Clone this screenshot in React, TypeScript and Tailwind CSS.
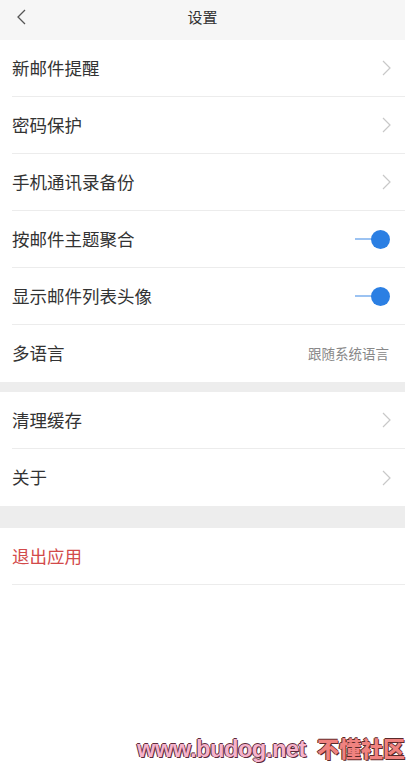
const groupA = [
  { label: "新邮件提醒", kind: "link" },
  { label: "密码保护", kind: "link" },
  { label: "手机通讯录备份", kind: "link" },
  { label: "按邮件主题聚合", kind: "toggle" },
  { label: "显示邮件列表头像", kind: "toggle" },
  { label: "多语言", kind: "value", value: "跟随系统语言" },
];

const groupB = ["清理缓存", "关于"];

const font = "font-['Noto_Sans_CJK_SC','Noto_Sans',sans-serif]";

function Chevron() {
  return (
    <svg width="9" height="16" viewBox="0 0 9 16" fill="none" className="mr-[14px]">
      <path d="M1 1l7 7-7 7" stroke="#c8c8c8" strokeWidth="1.2" />
    </svg>
  );
}

function Toggle() {
  return (
    <div className="flex items-center mr-[15px]">
      <div className="h-[2px] w-[18px] bg-[#9cc3f2]" />
      <div className="h-[19px] w-[19px] rounded-full bg-[#2b7fe3] -ml-[2px]" />
    </div>
  );
}

function Row({ label, right, danger, last }: { label: string; right?: React.ReactNode; danger?: boolean; last?: boolean }) {
  return (
    <div className="pl-3">
      <div className={`flex h-[57px] items-center justify-between ${last ? "" : "border-b border-[#ececec]"}`}>
        <span className={`text-[17.5px] ${danger ? "text-[#d24a4a]" : "text-[#333]"}`}>{label}</span>
        {right}
      </div>
    </div>
  );
}

export default function App() {
  return (
    <div className={`relative h-[768px] w-[412px] bg-white ${font}`}>
      <div className="w-[405px]">
        {/* Header */}
        <div className="relative flex h-10 items-center justify-center bg-[#f6f6f6] pb-[6px]">
          <svg width="10" height="16" viewBox="0 0 10 16" fill="none" className="absolute left-[16px] top-[9px]">
            <path d="M9 1L2 8l7 7" stroke="#555" strokeWidth="1.3" />
          </svg>
          <span className="text-[15px] text-[#333]">设置</span>
        </div>

        {groupA.map((item, i) => (
          <Row
            key={item.label}
            label={item.label}
            last={i === groupA.length - 1}
            right={
              item.kind === "link" ? (
                <Chevron />
              ) : item.kind === "toggle" ? (
                <Toggle />
              ) : (
                <span className="mr-[16px] text-[13.5px] text-[#888]">{item.value}</span>
              )
            }
          />
        ))}

        <div className="h-[10px] bg-[#ededed]" />

        {groupB.map((label, i) => (
          <Row key={label} label={label} last={i === groupB.length - 1} right={<Chevron />} />
        ))}

        <div className="h-[22px] bg-[#ededed]" />

        <Row label="退出应用" danger />
      </div>

      {/* Watermark */}
      <div className="absolute left-[137px] top-[731px] flex items-baseline gap-[11px] font-['Liberation_Sans',sans-serif] font-bold">
        <span className="text-[23.7px] tracking-[-0.5px] text-[#f6b3cb] [text-shadow:1px_1px_0_#5a2a3a,-1px_0_0_#5a2a3a,0_-1px_0_#5a2a3a]">
          www.budog.net
        </span>
        <span className="font-['Noto_Sans_CJK_SC',sans-serif] text-[22px] font-black text-[#f0827f] [text-shadow:1px_1px_0_#5a2a2a,-1px_0_0_#5a2a2a,0_-1px_0_#5a2a2a]">
          不懂社区
        </span>
      </div>
    </div>
  );
}
